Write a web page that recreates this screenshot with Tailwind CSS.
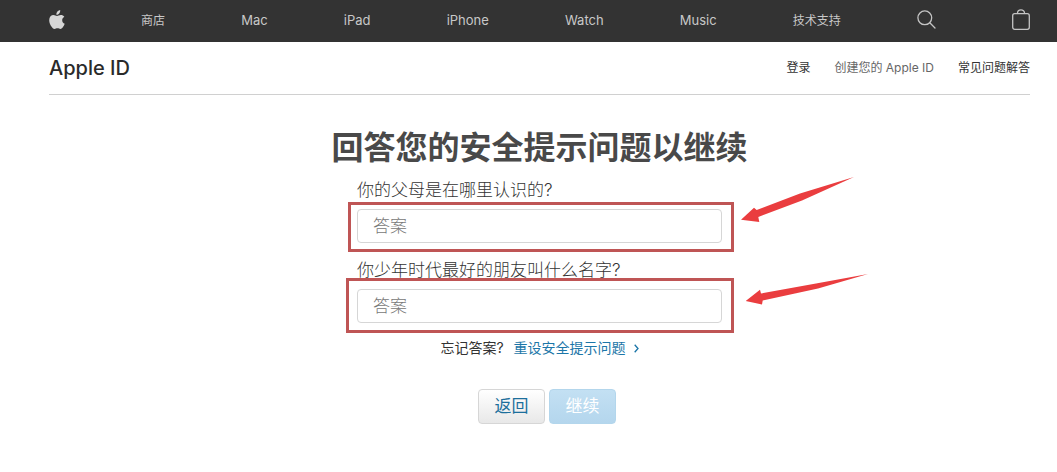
<!DOCTYPE html>
<html lang="zh-CN">
<head>
  <meta charset="UTF-8" />
  <meta name="viewport" content="width=device-width, initial-scale=1.0"/>
  <title>Apple ID</title>
  <script src="https://cdn.jsdelivr.net/npm/@tailwindcss/browser@4"></script>
</head>
<body class="bg-white min-h-screen font-['Inter','Noto_Sans_CJK_SC',sans-serif] text-[#333333]">

  <nav class="h-[42px] bg-[#333333] pl-[49px] pr-[27px] flex items-center justify-between text-[13px] text-[#c8c8c8]">
    <a href="#" aria-label="Apple" class="pb-1">
      <svg class="w-4 h-[19px]" viewBox="0 0 16 19" fill="#d6d6d6">
        <path d="M11.200 0c.2 1.300-.3 2.500-1 3.400-.8.900-1.800 1.500-2.800 1.400-.2-1.200.4-2.400 1-3.200C9.200.7 10.300.1 11.200 0z"/>
        <path d="M15.300 6.800c-1.300.8-2.100 1.900-2.100 3.400 0 1.700 1 3 2.500 3.600-.4 1.200-1 2.300-1.700 3.300-.7 1-1.400 1.900-2.600 1.900-1.100 0-1.500-.7-2.900-.7s-1.800.7-2.900.7c-1.200 0-2-1-2.800-2C1.200 15 .2 12.500.2 10.200c0-3.300 2.100-5.100 4.300-5.100 1.400 0 2.500.9 3.500.9.900 0 2.200-1 3.800-1 1.500 0 2.700.6 3.500 1.800z"/>
      </svg>
    </a>
    <a href="#" class="text-[12px]">商店</a>
    <a href="#">Mac</a>
    <a href="#">iPad</a>
    <a href="#">iPhone</a>
    <a href="#">Watch</a>
    <a href="#">Music</a>
    <a href="#" class="text-[12px]">技术支持</a>
    <button aria-label="搜索" class="pb-1">
      <svg class="w-[19px] h-[19px]" viewBox="0 0 19 19" fill="none" stroke="#c4c4c4" stroke-width="1.300" stroke-linecap="round">
        <circle cx="7.800" cy="7.800" r="6.900"/>
        <path d="M12.800 12.800l5.200 5.200"/>
      </svg>
    </button>
    <a href="#" aria-label="购物袋" class="pb-1">
      <svg class="w-[18px] h-[21px]" viewBox="0 0 18 21" fill="none" stroke="#c4c4c4" stroke-width="1.300">
        <rect x=".7" y="4.700" width="16.600" height="15.600" rx="2"/>
        <path d="M5.500 4.700V4a3.500 3.200 0 0 1 7 0v.7"/>
      </svg>
    </a>
  </nav>

  <div class="pl-[49px] pr-[27px]">
    <header class="h-[53px] border-b border-[#d0d0d0] flex items-center justify-between">
      <h2 class="text-[20px] font-medium text-[#2a2a2a]">Apple ID</h2>
      <div class="flex gap-6 text-[12px]">
        <a href="#">登录</a>
        <a href="#" class="text-[#666666]">创建您的 Apple ID</a>
        <a href="#">常见问题解答</a>
      </div>
    </header>

    <main class="flex flex-col items-center pt-7">
      <h1 class="text-[32px] leading-[50px] font-bold text-[#494949]">回答您的安全提示问题以继续</h1>

      <form class="w-[365px] max-w-full flex flex-col pt-1">
        <label for="answer1" class="text-[17px] leading-[26px] font-light">你的父母是在哪里认识的?</label>
        <div class="relative mt-1.5 mb-3.5">
          <input id="answer1" type="text" placeholder="答案" class="block w-full h-[34px] px-[15px] text-[17px] font-light border border-[#d6d6d6] rounded-[4px] placeholder:text-[#777777]"/>
          <div class="absolute -left-[9px] -right-[12px] -top-[7px] -bottom-[9px] border-3 border-[#bf5555] pointer-events-none"></div>
          <svg class="absolute left-full -top-[34px] ml-[18px] w-[116px] h-[48px]" viewBox="0 0 116 48" fill="#ea3d3f">
            <path d="M1 44.700L14 32.700L16.700 35L60 18.500L114 2L62 25.500L18.300 42L19.300 47z"/>
          </svg>
        </div>

        <label for="answer2" class="text-[17px] leading-[26px] font-light">你少年时代最好的朋友叫什么名字?</label>
        <div class="relative mt-1.5 mb-3">
          <input id="answer2" type="text" placeholder="答案" class="block w-full h-[34px] px-[15px] text-[17px] font-light border border-[#d6d6d6] rounded-[4px] placeholder:text-[#777777]"/>
          <div class="absolute -left-[11px] -right-[12px] -top-[11px] -bottom-[10px] border-3 border-[#bf5555] pointer-events-none"></div>
          <svg class="absolute left-full -top-[17px] ml-[22px] w-[126px] h-[34px]" viewBox="0 0 126 34" fill="#ea3d3f">
            <path d="M1.700 29L16 17.700L17 21.500L72 11.500L124 2L74 16.500L18.700 28.500L18 32.500z"/>
          </svg>
        </div>

        <p class="flex items-center justify-center gap-2.5 text-[14px] leading-[26px]">
          忘记答案?
          <a href="#" class="flex items-center gap-2 text-[#1c76a8]">重设安全提示问题
            <svg class="w-[5px] h-[9px]" viewBox="0 0 5 9" fill="none" stroke="#1c76a8" stroke-width="1.300"><path d="M.7.7l3.300 3.800L.7 8.300"/></svg>
          </a>
        </p>

        <div class="flex justify-center gap-1 pt-7 pl-[15px]">
          <button type="button" class="w-[67px] h-[35px] text-[17px] text-[#1c6f9c] rounded-[4px] border border-[#d6d6d6] bg-linear-to-b from-white to-[#e8e8e8]">返回</button>
          <button type="submit" class="w-[67px] h-[35px] text-[17px] text-white rounded-[4px] border border-[#b3d6ec] bg-linear-to-b from-[#c3e0f3] to-[#b4d6ed]">继续</button>
        </div>
      </form>
    </main>
  </div>

</body>
</html>
